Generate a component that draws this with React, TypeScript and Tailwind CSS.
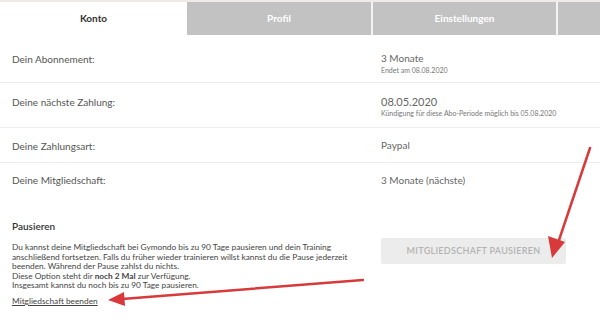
const font = { fontFamily: 'Lato, "Open Sans", sans-serif' }

interface RowProps {
  label: string
  value: string
  sub?: string
  big?: boolean
  className: string
}

function Row({ label, value, sub, big, className }: RowProps) {
  return (
    <div className={`flex border-b border-[#ededed] ${className}`}>
      <div className="w-[381px] pl-3 text-[10px] text-[#555]">{label}</div>
      <div className="flex flex-col">
        <span className={big ? 'text-[11px] leading-[13px] text-[#666]' : 'text-[10px] leading-[13px] text-[#666]'}>
          {value}
        </span>
        {sub && <span className="text-[7px] leading-[10px] text-[#777]">{sub}</span>}
      </div>
    </div>
  )
}

export default function App() {
  return (
    <div className="relative w-[600px] h-[320px] overflow-hidden bg-white" style={font}>
      <div className="border-t-2 border-[#efece6]">
        <div className="flex h-[33px] text-[10px] font-bold">
          <div className="w-[187px] flex items-center justify-center text-[#333]">Konto</div>
          <div className="w-[184px] flex items-center justify-center bg-[#c2c2c2] text-white">Profil</div>
          <div className="w-[2px] bg-[#f3f3f3]" />
          <div className="w-[183px] flex items-center justify-center bg-[#c2c2c2] text-white">Einstellungen</div>
          <div className="w-[2px] bg-[#f3f3f3]" />
          <div className="flex-1 bg-[#c2c2c2]" />
        </div>
      </div>

      <Row label="Dein Abonnement:" value="3 Monate" sub="Endet am 08.08.2020" className="h-[48px] items-start pt-[17px]" />
      <Row
        label="Deine nächste Zahlung:"
        value="08.05.2020"
        sub="Kündigung für diese Abo-Periode möglich bis 05.08.2020"
        big
        className="h-[45px] items-start pt-[12px]"
      />
      <Row label="Deine Zahlungsart:" value="Paypal" className="h-[35px] items-start pt-[11px]" />
      <div className="flex pt-[11px] h-[57px]">
        <div className="w-[381px] pl-3 text-[10px] leading-[13px] text-[#555]">Deine Mitgliedschaft:</div>
        <span className="text-[10px] leading-[13px] text-[#666]">3 Monate (nächste)</span>
      </div>

      <div className="flex pl-3">
        <div className="w-[369px]">
          <h3 className="text-[10px] leading-[13px] font-semibold text-[#333]">Pausieren</h3>
          <p className="mt-[10px] text-[8.3px] leading-[9.6px] text-[#444] whitespace-nowrap">
            Du kannst deine Mitgliedschaft bei Gymondo bis zu 90 Tage pausieren und dein Training
            <br />
            anschließend fortsetzen. Falls du früher wieder trainieren willst kannst du die Pause jederzeit
            <br />
            beenden. Während der Pause zahlst du nichts.
            <br />
            Diese Option steht dir <b>noch 2 Mal</b> zur Verfügung.
            <br />
            Insgesamt kannst du noch bis zu 90 Tage pausieren.
          </p>
          <a className="block mt-[5px] text-[8.3px] leading-[10px] text-[#444] underline">Mitgliedschaft beenden</a>
        </div>
        <div className="pt-[16px]">
          <button className="w-[185px] h-[26px] rounded-[2px] bg-[#ececec] text-[9px] font-semibold tracking-[0.3px] text-[#b3b3b3]">
            MITGLIEDSCHAFT PAUSIEREN
          </button>
        </div>
      </div>

      <svg className="absolute inset-0 pointer-events-none" width="600" height="320" viewBox="0 0 600 320">
        <g stroke="#d83a3b" strokeWidth="2.5" strokeLinecap="round" fill="#d83a3b">
          <line x1="590" y1="148" x2="557" y2="246" />
          <polygon points="552,258 548,236 565,242" stroke="none" />
          <line x1="363" y1="280" x2="122" y2="299" />
          <polygon points="108,300 124,292 125,306" stroke="none" />
        </g>
      </svg>
    </div>
  )
}
